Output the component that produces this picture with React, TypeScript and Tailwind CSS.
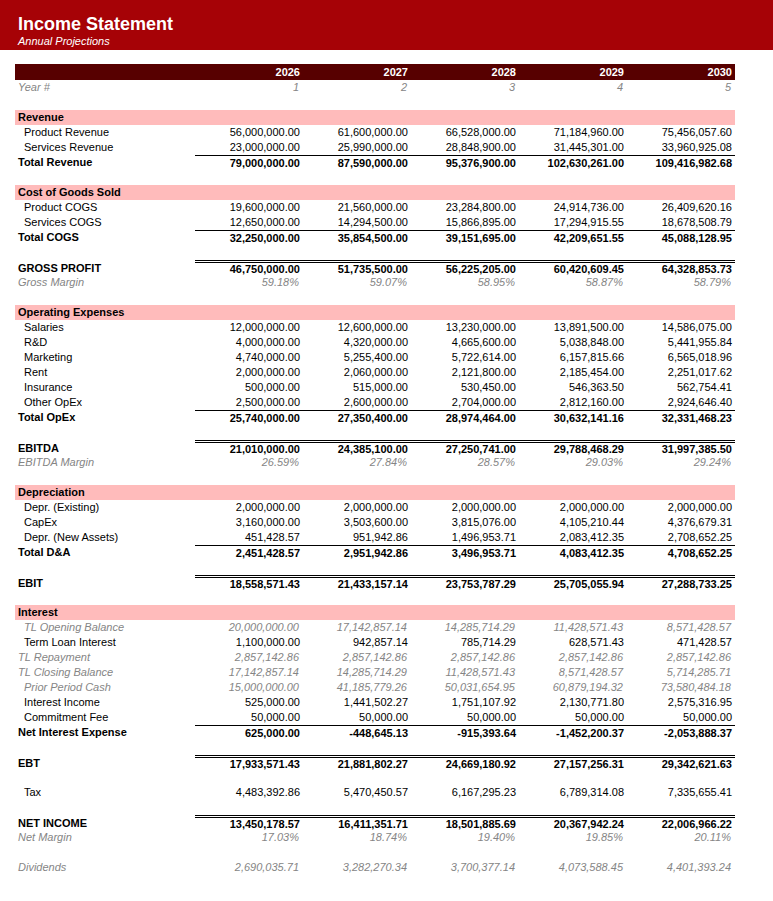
type RowKind = "blank" | "section" | "item" | "total" | "key" | "muted";

type Row = {
  kind: RowKind;
  label?: string;
  values?: string[];
  indent?: boolean;
};

const years = ["2026", "2027", "2028", "2029", "2030"];

const rows: Row[] = [
  { kind: "muted", label: "Year #", values: ["1", "2", "3", "4", "5"] },
  { kind: "blank" },
  { kind: "section", label: "Revenue" },
  { kind: "item", indent: true, label: "Product Revenue", values: ["56,000,000.00", "61,600,000.00", "66,528,000.00", "71,184,960.00", "75,456,057.60"] },
  { kind: "item", indent: true, label: "Services Revenue", values: ["23,000,000.00", "25,990,000.00", "28,848,900.00", "31,445,301.00", "33,960,925.08"] },
  { kind: "total", label: "Total Revenue", values: ["79,000,000.00", "87,590,000.00", "95,376,900.00", "102,630,261.00", "109,416,982.68"] },
  { kind: "blank" },
  { kind: "section", label: "Cost of Goods Sold" },
  { kind: "item", indent: true, label: "Product COGS", values: ["19,600,000.00", "21,560,000.00", "23,284,800.00", "24,914,736.00", "26,409,620.16"] },
  { kind: "item", indent: true, label: "Services COGS", values: ["12,650,000.00", "14,294,500.00", "15,866,895.00", "17,294,915.55", "18,678,508.79"] },
  { kind: "total", label: "Total COGS", values: ["32,250,000.00", "35,854,500.00", "39,151,695.00", "42,209,651.55", "45,088,128.95"] },
  { kind: "blank" },
  { kind: "key", label: "GROSS PROFIT", values: ["46,750,000.00", "51,735,500.00", "56,225,205.00", "60,420,609.45", "64,328,853.73"] },
  { kind: "muted", label: "Gross Margin", values: ["59.18%", "59.07%", "58.95%", "58.87%", "58.79%"] },
  { kind: "blank" },
  { kind: "section", label: "Operating Expenses" },
  { kind: "item", indent: true, label: "Salaries", values: ["12,000,000.00", "12,600,000.00", "13,230,000.00", "13,891,500.00", "14,586,075.00"] },
  { kind: "item", indent: true, label: "R&D", values: ["4,000,000.00", "4,320,000.00", "4,665,600.00", "5,038,848.00", "5,441,955.84"] },
  { kind: "item", indent: true, label: "Marketing", values: ["4,740,000.00", "5,255,400.00", "5,722,614.00", "6,157,815.66", "6,565,018.96"] },
  { kind: "item", indent: true, label: "Rent", values: ["2,000,000.00", "2,060,000.00", "2,121,800.00", "2,185,454.00", "2,251,017.62"] },
  { kind: "item", indent: true, label: "Insurance", values: ["500,000.00", "515,000.00", "530,450.00", "546,363.50", "562,754.41"] },
  { kind: "item", indent: true, label: "Other OpEx", values: ["2,500,000.00", "2,600,000.00", "2,704,000.00", "2,812,160.00", "2,924,646.40"] },
  { kind: "total", label: "Total OpEx", values: ["25,740,000.00", "27,350,400.00", "28,974,464.00", "30,632,141.16", "32,331,468.23"] },
  { kind: "blank" },
  { kind: "key", label: "EBITDA", values: ["21,010,000.00", "24,385,100.00", "27,250,741.00", "29,788,468.29", "31,997,385.50"] },
  { kind: "muted", label: "EBITDA Margin", values: ["26.59%", "27.84%", "28.57%", "29.03%", "29.24%"] },
  { kind: "blank" },
  { kind: "section", label: "Depreciation" },
  { kind: "item", indent: true, label: "Depr. (Existing)", values: ["2,000,000.00", "2,000,000.00", "2,000,000.00", "2,000,000.00", "2,000,000.00"] },
  { kind: "item", indent: true, label: "CapEx", values: ["3,160,000.00", "3,503,600.00", "3,815,076.00", "4,105,210.44", "4,376,679.31"] },
  { kind: "item", indent: true, label: "Depr. (New Assets)", values: ["451,428.57", "951,942.86", "1,496,953.71", "2,083,412.35", "2,708,652.25"] },
  { kind: "total", label: "Total D&A", values: ["2,451,428.57", "2,951,942.86", "3,496,953.71", "4,083,412.35", "4,708,652.25"] },
  { kind: "blank" },
  { kind: "key", label: "EBIT", values: ["18,558,571.43", "21,433,157.14", "23,753,787.29", "25,705,055.94", "27,288,733.25"] },
  { kind: "blank" },
  { kind: "section", label: "Interest" },
  { kind: "muted", indent: true, label: "TL Opening Balance", values: ["20,000,000.00", "17,142,857.14", "14,285,714.29", "11,428,571.43", "8,571,428.57"] },
  { kind: "item", indent: true, label: "Term Loan Interest", values: ["1,100,000.00", "942,857.14", "785,714.29", "628,571.43", "471,428.57"] },
  { kind: "muted", label: "TL Repayment", values: ["2,857,142.86", "2,857,142.86", "2,857,142.86", "2,857,142.86", "2,857,142.86"] },
  { kind: "muted", label: "TL Closing Balance", values: ["17,142,857.14", "14,285,714.29", "11,428,571.43", "8,571,428.57", "5,714,285.71"] },
  { kind: "muted", indent: true, label: "Prior Period Cash", values: ["15,000,000.00", "41,185,779.26", "50,031,654.95", "60,879,194.32", "73,580,484.18"] },
  { kind: "item", indent: true, label: "Interest Income", values: ["525,000.00", "1,441,502.27", "1,751,107.92", "2,130,771.80", "2,575,316.95"] },
  { kind: "item", indent: true, label: "Commitment Fee", values: ["50,000.00", "50,000.00", "50,000.00", "50,000.00", "50,000.00"] },
  { kind: "total", label: "Net Interest Expense", values: ["625,000.00", "-448,645.13", "-915,393.64", "-1,452,200.37", "-2,053,888.37"] },
  { kind: "blank" },
  { kind: "key", label: "EBT", values: ["17,933,571.43", "21,881,802.27", "24,669,180.92", "27,157,256.31", "29,342,621.63"] },
  { kind: "blank" },
  { kind: "item", indent: true, label: "Tax", values: ["4,483,392.86", "5,470,450.57", "6,167,295.23", "6,789,314.08", "7,335,655.41"] },
  { kind: "blank" },
  { kind: "key", label: "NET INCOME", values: ["13,450,178.57", "16,411,351.71", "18,501,885.69", "20,367,942.24", "22,006,966.22"] },
  { kind: "muted", label: "Net Margin", values: ["17.03%", "18.74%", "19.40%", "19.85%", "20.11%"] },
  { kind: "blank" },
  { kind: "muted", label: "Dividends", values: ["2,690,035.71", "3,282,270.34", "3,700,377.14", "4,073,588.45", "4,401,393.24"] },
];

function StatementRow({ row }: { row: Row }) {
  if (row.kind === "blank") {
    return <div className="h-[15px]" />;
  }

  if (row.kind === "section") {
    return (
      <div className="flex h-[15px] items-center bg-[#ffbbbb] pl-[3px] font-bold text-black">
        {row.label}
      </div>
    );
  }

  const bold = row.kind === "total" || row.kind === "key";
  const muted = row.kind === "muted";

  const labelClass = [
    "flex items-center",
    row.indent ? "pl-[9px]" : "pl-[3px]",
    bold ? "font-bold" : "",
    muted ? "italic text-[#858585]" : "text-black",
  ].join(" ");

  const cellClass = [
    "flex items-center justify-end",
    bold ? "font-bold" : "",
    muted ? "italic text-[#858585] pr-[4px]" : "text-black pr-[3px]",
    row.kind === "total" ? "border-t border-black" : "",
    row.kind === "key" ? "border-t-[3px] border-double border-black" : "",
  ].join(" ");

  return (
    <div className="grid h-[15px] grid-cols-[180px_repeat(5,108px)]">
      <div className={labelClass}>{row.label}</div>
      {row.values?.map((v, i) => (
        <div key={i} className={cellClass}>
          {v}
        </div>
      ))}
    </div>
  );
}

export default function App() {
  return (
    <main className="min-h-[901px] w-[773px] bg-white font-['Liberation_Sans',Arial,sans-serif]">
      <header className="h-[50px] bg-[#a60206] pl-[18px] pt-[14px] text-white">
        <h1 className="text-[18px] font-bold leading-[20px]">Income Statement</h1>
        <p className="mt-[1px] text-[11px] italic leading-[12px]">Annual Projections</p>
      </header>

      <div className="ml-[15px] mt-[14px] w-[720px] text-[11px] leading-[13px]">
        <div className="grid h-[16px] grid-cols-[180px_repeat(5,108px)] bg-[#570000] font-bold text-white">
          <div />
          {years.map((y) => (
            <div key={y} className="flex items-center justify-end pr-[3px]">
              {y}
            </div>
          ))}
        </div>
        {rows.map((row, i) => (
          <StatementRow key={i} row={row} />
        ))}
      </div>
    </main>
  );
}
